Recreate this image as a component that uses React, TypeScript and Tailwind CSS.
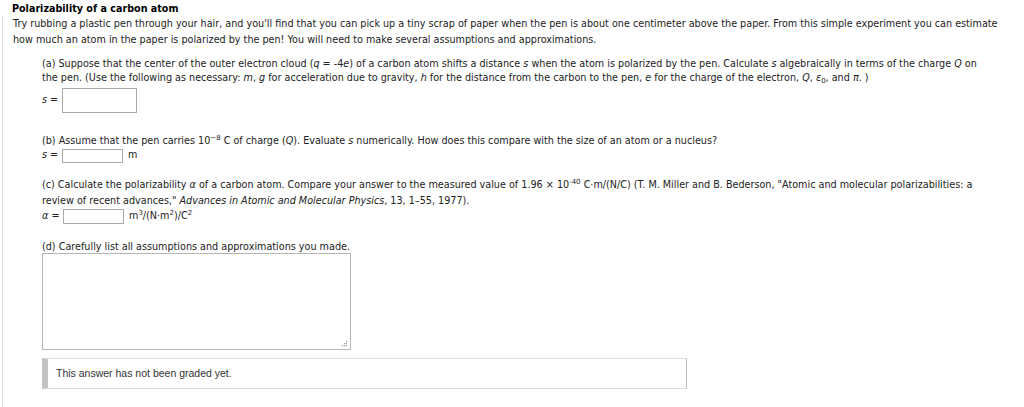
import React from "react";

const I = ({ children }: { children: React.ReactNode }) => <i>{children}</i>;
const Sup = ({ children }: { children: React.ReactNode }) => (
  <sup className="text-[7px] leading-none align-baseline relative top-[-4px]">{children}</sup>
);
const Sub = ({ children }: { children: React.ReactNode }) => (
  <sub className="text-[7px] leading-none align-baseline relative top-[2px]">{children}</sub>
);

export default function App() {
  return (
    <div className="w-[1024px] h-[407px] bg-white text-[#222] overflow-hidden" style={{ fontFamily: '"DejaVu Sans", Verdana, sans-serif' }}>
      <div className="pl-[12px] pt-[1px] leading-[15px]">
        <div className="font-bold text-[9.6px] text-black">Polarizability of a carbon atom</div>
      </div>
      <div className="ml-[2px] border-l border-[#e2e2e2] pl-[10px] text-[9.65px]">
        <p className="leading-[16px] pr-[16px]">
          Try rubbing a plastic pen through your hair, and you'll find that you can pick up a tiny scrap of paper when the pen is about one centimeter above the paper. From this simple experiment you can estimate how much an atom in the paper is polarized by the pen! You will need to make several assumptions and approximations.
        </p>
        <div className="ml-[29px] pr-[31px]">
          {/* (a) */}
          <p className="mt-[9px] leading-[14px]">
            (a) Suppose that the center of the outer electron cloud (<I>q</I> = -4<I>e</I>) of a carbon atom shifts a distance <I>s</I> when the atom is polarized by the pen. Calculate <I>s</I> algebraically in terms of the charge <I>Q</I> on the pen. (Use the following as necessary: <I>m</I>, <I>g</I> for acceleration due to gravity, <I>h</I> for the distance from the carbon to the pen, <I>e</I> for the charge of the electron, <I>Q</I>, <I>ε</I><Sub>0</Sub>, and <I>π</I>. )
          </p>
          <div className="mt-[3px] flex items-center h-[25px]">
            <span className="w-[20px]"><I>s</I> =</span>
            <div className="w-[75px] h-[25px] border border-[#aaa] bg-white" />
          </div>
          {/* (b) */}
          <p className="mt-[21px] leading-[14px]">
            (b) Assume that the pen carries 10<Sup>−8</Sup> C of charge (<I>Q</I>). Evaluate <I>s</I> numerically. How does this compare with the size of an atom or a nucleus?
          </p>
          <div className="mt-[0px] flex items-center h-[15px]">
            <span className="w-[20px]"><I>s</I> =</span>
            <div className="w-[61px] h-[14px] border border-[#aaa] bg-white" />
            <span className="ml-[5px]">m</span>
          </div>
          {/* (c) */}
          <p className="mt-[14px] leading-[16px]">
            (c) Calculate the polarizability <I>α</I> of a carbon atom. Compare your answer to the measured value of 1.96 × 10<Sup>-40</Sup> C·m/(N/C) (T. M. Miller and B. Bederson, "Atomic and molecular polarizabilities: a review of recent advances," <I>Advances in Atomic and Molecular Physics</I>, 13, 1–55, 1977).
          </p>
          <div className="flex items-center h-[15px]">
            <span className="w-[21px]"><I>α</I> =</span>
            <div className="w-[61px] h-[15px] border border-[#aaa] bg-white" />
            <span className="ml-[5px]">m<Sup>3</Sup>/(N·m<Sup>2</Sup>)/C<Sup>2</Sup></span>
          </div>
          {/* (d) */}
          <p className="mt-[16px] leading-[14px]">(d) Carefully list all assumptions and approximations you made.</p>
          <div className="mt-[-1px] relative w-[309px] h-[97px] border border-[#b5b5b5] bg-white">
            <svg className="absolute right-[2px] bottom-[2px]" width="7" height="7" viewBox="0 0 7 7">
              <rect x="5" y="1" width="1.2" height="1.2" fill="#999" />
              <rect x="5" y="3" width="1.2" height="1.2" fill="#999" />
              <rect x="3" y="3" width="1.2" height="1.2" fill="#999" />
              <rect x="5" y="5" width="1.2" height="1.2" fill="#999" />
              <rect x="3" y="5" width="1.2" height="1.2" fill="#999" />
              <rect x="1" y="5" width="1.2" height="1.2" fill="#999" />
            </svg>
          </div>
          <div className="mt-[8px] w-[645px] h-[31px] flex items-center border-y border-r border-y-[#ddd] border-r-[#bbb] border-l-[6px] border-l-[#c4c4c4] pl-[8px]">
            <span className="text-[10.5px] text-[#333]" style={{ fontFamily: '"Liberation Sans", Arial, sans-serif' }}>This answer has not been graded yet.</span>
          </div>
          <div className="h-[20px]" />
        </div>
      </div>
    </div>
  );
}
